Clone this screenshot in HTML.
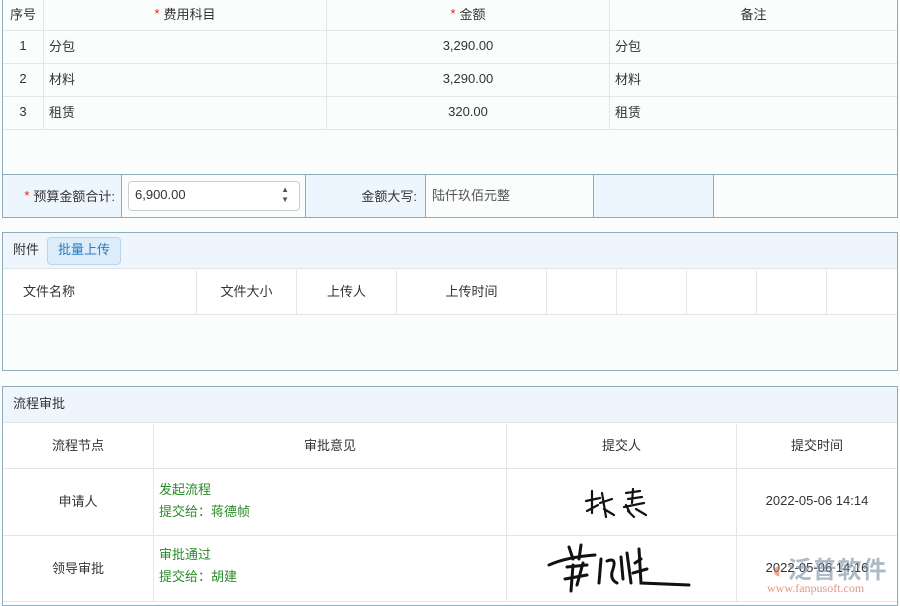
<!DOCTYPE html>
<html><head><meta charset="utf-8"><style>
*{margin:0;padding:0;box-sizing:border-box}
body{width:900px;height:600px;overflow:hidden;background:#fbfdfd;font-family:"Liberation Sans","Noto Sans CJK SC",sans-serif;font-size:13px;color:#333;position:relative}
.a{position:absolute}
.c{position:absolute;display:flex;align-items:center;justify-content:center;border-right:1px solid #e2e6e8;border-bottom:1px solid #e2e6e8;padding-bottom:3px}
.l{justify-content:flex-start;padding-left:5px}
.s{color:#e02020;margin-right:4px}
.g{color:#2a8a2a}
</style></head><body>
<!-- top table -->
<div class="a" style="left:2px;top:0;width:896px;height:218px;border:1px solid #8eadbc;border-top:none;background:#fbfdfd"></div>
<div class="c" style="left:3px;top:0;width:41px;height:31px">序号</div>
<div class="c" style="left:44px;top:0;width:283px;height:31px"><span class="s">*</span>费用科目</div>
<div class="c" style="left:327px;top:0;width:283px;height:31px"><span class="s">*</span>金额</div>
<div class="c" style="left:610px;top:0;width:287px;height:31px;border-right:none">备注</div>

<div class="c" style="left:3px;top:31px;width:41px;height:33px">1</div>
<div class="c l" style="left:44px;top:31px;width:283px;height:33px">分包</div>
<div class="c" style="left:327px;top:31px;width:283px;height:33px">3,290.00</div>
<div class="c l" style="left:610px;top:31px;width:287px;height:33px;border-right:none">分包</div>
<div class="c" style="left:3px;top:64px;width:41px;height:33px">2</div>
<div class="c l" style="left:44px;top:64px;width:283px;height:33px">材料</div>
<div class="c" style="left:327px;top:64px;width:283px;height:33px">3,290.00</div>
<div class="c l" style="left:610px;top:64px;width:287px;height:33px;border-right:none">材料</div>
<div class="c" style="left:3px;top:97px;width:41px;height:33px">3</div>
<div class="c l" style="left:44px;top:97px;width:283px;height:33px">租赁</div>
<div class="c" style="left:327px;top:97px;width:283px;height:33px">320.00</div>
<div class="c l" style="left:610px;top:97px;width:287px;height:33px;border-right:none">租赁</div>

<div class="a" style="left:3px;top:174px;width:894px;height:1px;background:#8eadbc"></div>
<div class="a" style="left:3px;top:175px;width:119px;height:42px;background:#eef6fd;border-right:1px solid #8eadbc;display:flex;align-items:center;justify-content:flex-end;padding-right:6px;padding-bottom:2px"><span class="s">*</span>预算金额合计:</div>
<div class="a" style="left:128px;top:181px;width:172px;height:30px;border:1px solid #c9d0d4;border-radius:4px;background:#fff;padding-left:6px;line-height:26px">6,900.00<span style="position:absolute;right:10px;top:3px;font-size:8px;line-height:10px;color:#555">▲<br>▼</span></div>
<div class="a" style="left:305px;top:175px;width:121px;height:42px;background:#eef6fd;border-left:1px solid #8eadbc;border-right:1px solid #8eadbc;display:flex;align-items:center;justify-content:flex-end;padding-right:8px;padding-bottom:2px">金额大写:</div>
<div class="a" style="left:432px;top:175px;line-height:42px;color:#555">陆仟玖佰元整</div>
<div class="a" style="left:593px;top:175px;width:121px;height:42px;background:#eef6fd;border-left:1px solid #8eadbc;border-right:1px solid #8eadbc"></div>

<!-- attachments -->
<div class="a" style="left:2px;top:232px;width:896px;height:139px;border:1px solid #8eadbc;background:#fbfdfd"></div>
<div class="a" style="left:3px;top:233px;width:894px;height:36px;background:#eef5fd;border-bottom:1px solid #e2e6e8"></div>
<div class="a" style="left:13px;top:233px;line-height:34px">附件</div>
<div class="a" style="left:47px;top:237px;width:74px;height:28px;border:1px solid #b9d6ea;border-radius:4px;background:#dcecf9;color:#2b7bc0;line-height:24px;text-align:center">批量上传</div>
<div class="c l" style="left:3px;top:270px;width:194px;height:45px;background:#fff;padding-left:20px">文件名称</div>
<div class="c" style="left:197px;top:270px;width:100px;height:45px;background:#fff">文件大小</div>
<div class="c" style="left:297px;top:270px;width:100px;height:45px;background:#fff">上传人</div>
<div class="c" style="left:397px;top:270px;width:150px;height:45px;background:#fff">上传时间</div>
<div class="c" style="left:547px;top:270px;width:70px;height:45px;background:#fff"></div>
<div class="c" style="left:617px;top:270px;width:70px;height:45px;background:#fff"></div>
<div class="c" style="left:687px;top:270px;width:70px;height:45px;background:#fff"></div>
<div class="c" style="left:757px;top:270px;width:70px;height:45px;background:#fff"></div>
<div class="c" style="left:827px;top:270px;width:70px;height:45px;background:#fff;border-right:none"></div>

<!-- approval -->
<div class="a" style="left:2px;top:386px;width:896px;height:220px;border:1px solid #8eadbc;background:#fff"></div>
<div class="a" style="left:3px;top:387px;width:894px;height:36px;background:#eef5fd;border-bottom:1px solid #e2e6e8;padding-left:10px;line-height:34px">流程审批</div>
<div class="c" style="left:3px;top:424px;width:151px;height:45px">流程节点</div>
<div class="c" style="left:154px;top:424px;width:353px;height:45px">审批意见</div>
<div class="c" style="left:507px;top:424px;width:230px;height:45px">提交人</div>
<div class="c" style="left:737px;top:424px;width:160px;height:45px;border-right:none">提交时间</div>

<div class="c" style="left:3px;top:469px;width:151px;height:67px">申请人</div>
<div class="c l" style="left:154px;top:469px;width:353px;height:67px;display:block;padding-top:10px;line-height:22px"><div class="g">发起流程</div><div class="g">提交给：蒋德帧</div></div>
<div class="c" style="left:507px;top:469px;width:230px;height:67px"><svg width="80" height="40" viewBox="0 0 80 40" fill="none" stroke="#111" stroke-width="2.2" stroke-linecap="round"><path d="M4 20 L18 17 M10 10 L10 32 M5 30 L16 24 M20 12 L24 36 M18 22 L30 18 M22 28 L32 34"/><path d="M44 12 L58 10 M46 18 L60 16 M51 8 L50 22 M42 26 L62 22 M46 30 L52 36 M54 28 L64 34 M44 24 L48 32"/></svg></div>
<div class="c" style="left:737px;top:469px;width:160px;height:67px;border-right:none">2022-05-06 14:14</div>

<div class="c" style="left:3px;top:536px;width:151px;height:66px">领导审批</div>
<div class="c l" style="left:154px;top:536px;width:353px;height:66px;display:block;padding-top:8px;line-height:22px"><div class="g">审批通过</div><div class="g">提交给：胡建</div></div>
<div class="c" style="left:507px;top:536px;width:230px;height:66px"><svg width="150" height="56" viewBox="0 0 150 56" fill="none" stroke="#111" stroke-width="3" stroke-linecap="round"><path d="M2 26 Q20 18 48 16 M22 8 L26 20 M34 6 L32 20 M20 28 L40 26 M26 26 L24 52 M36 24 L30 46 M18 40 L40 36"/><path d="M54 20 L52 44 M60 22 Q70 18 66 30 Q62 40 70 44 M74 18 L76 40 M80 14 L84 44 M88 24 L94 20 M86 34 L100 30 M92 10 L94 44 L142 46"/></svg></div>
<div class="c" style="left:737px;top:536px;width:160px;height:66px;border-right:none">2022-05-06 14:16</div>

<!-- watermark -->
<div class="a" style="left:772px;top:550px;font-size:24px;color:rgba(120,140,160,0.6);font-weight:bold;letter-spacing:1px"><span style="color:rgba(220,110,80,0.6)">◐</span>泛普软件</div>
<div class="a" style="left:767px;top:581px;font-size:12px;color:rgba(210,110,80,0.7);font-family:'Liberation Serif',serif">www.fanpusoft.com</div>
</body></html>
